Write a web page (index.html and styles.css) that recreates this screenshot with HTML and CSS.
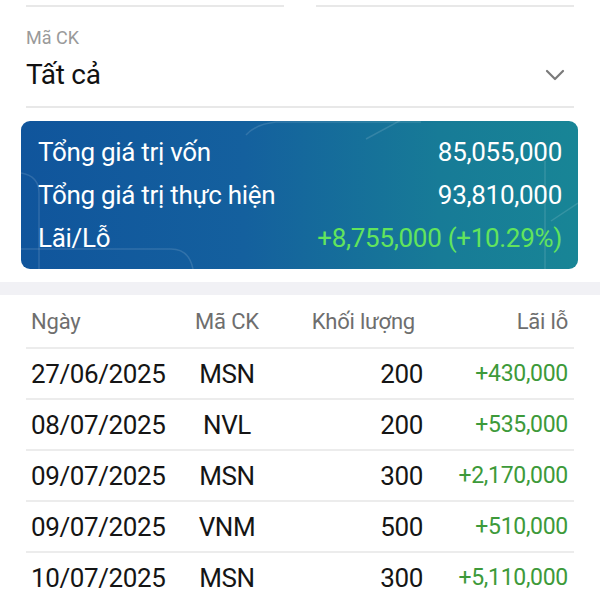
FILE: index.html
```html
<!DOCTYPE html>
<html lang="vi">
<head>
<meta charset="utf-8">
<title>Lãi lỗ</title>
<link rel="stylesheet" href="styles.css">
</head>
<body>
<div class="top-lines">
  <div class="top-line"></div>
  <div class="top-line"></div>
</div>

<div class="field">
  <div class="field-label">Mã CK</div>
  <div class="field-value">
    <span>Tất cả</span>
    <svg class="chevron" width="20" height="12" viewBox="0 0 20 12"><path d="M2 2 L10 10 L18 2" fill="none" stroke="#7a7a7a" stroke-width="2.2" stroke-linecap="round" stroke-linejoin="round"/></svg>
  </div>
</div>

<div class="card">
  <svg class="card-deco" width="557" height="148" viewBox="0 0 557 148" preserveAspectRatio="none">
    <g fill="none" stroke="#ffffff" stroke-opacity="0.13" stroke-width="1.5">
      <path d="M225 14 Q235 3 255 1 L400 1"/>
      <path d="M345 18 L382 -2"/>
      <path d="M524 40 L524 148"/>
      <path d="M530 100 L557 82"/>
      <path d="M18 150 L18 72 Q18 55 0 52"/>
      <path d="M0 128 L150 128 Q168 128 172 148"/>
    </g>
  </svg>
  <div class="card-row"><span>Tổng giá trị vốn</span><span>85,055,000</span></div>
  <div class="card-row"><span>Tổng giá trị thực hiện</span><span>93,810,000</span></div>
  <div class="card-row"><span>Lãi/Lỗ</span><span class="up-bright">+8,755,000 (+10.29%)</span></div>
</div>

<div class="band"></div>

<div class="table">
  <div class="thead">
    <span class="c-date">Ngày</span>
    <span class="c-code">Mã CK</span>
    <span class="c-vol h-vol">Khối lượng</span>
    <span class="c-pl">Lãi lỗ</span>
  </div>
  <div class="trow">
    <span class="c-date">27/06/2025</span><span class="c-code">MSN</span><span class="c-vol">200</span><span class="c-pl up">+430,000</span>
  </div>
  <div class="trow">
    <span class="c-date">08/07/2025</span><span class="c-code">NVL</span><span class="c-vol">200</span><span class="c-pl up">+535,000</span>
  </div>
  <div class="trow">
    <span class="c-date">09/07/2025</span><span class="c-code">MSN</span><span class="c-vol">300</span><span class="c-pl up">+2,170,000</span>
  </div>
  <div class="trow">
    <span class="c-date">09/07/2025</span><span class="c-code">VNM</span><span class="c-vol">500</span><span class="c-pl up">+510,000</span>
  </div>
  <div class="trow">
    <span class="c-date">10/07/2025</span><span class="c-code">MSN</span><span class="c-vol">300</span><span class="c-pl up">+5,110,000</span>
  </div>
</div>
</body>
</html>
```
FILE: styles.css
```css
* { box-sizing: border-box; }
html, body {
  margin: 0;
  padding: 0;
  background: #ffffff;
  font-family: Roboto, "Noto Sans", "Liberation Sans", sans-serif;
  color: #1a1a1a;
  overflow: hidden;
}
.top-lines {
  display: flex;
  gap: 32px;
  padding: 0 26px;
  height: 7px;
}
.top-line {
  flex: 1;
  border-bottom: 2px solid #e8e8e8;
}
.field {
  padding: 0 26px;
}
.field-label {
  margin-top: 20px;
  font-size: 18px;
  line-height: 22px;
  color: #9a9a9a;
}
.field-value {
  display: flex;
  align-items: center;
  justify-content: space-between;
  height: 59px;
  padding-bottom: 10px;
  padding-top: 4px;
  font-size: 28px;
  letter-spacing: -0.3px;
  color: #111;
  border-bottom: 2px solid #e8e8e8;
}
.chevron {
  margin-right: 9px;
}
.card {
  position: relative;
  overflow: hidden;
  margin: 13px 22px 0 21px;
  height: 148px;
  padding: 9px 16px 10px 17px;
  border-radius: 9px;
  background: linear-gradient(90deg, #10559c 0%, #14609e 40%, #177b97 75%, #188596 100%);
  color: #ffffff;
}
.card-deco {
  position: absolute;
  left: 0;
  top: 0;
}
.card-row {
  position: relative;
  display: flex;
  justify-content: space-between;
  align-items: center;
  height: 43px;
  font-size: 26px;
  letter-spacing: -0.3px;
}
.up-bright { color: #62e45c; }
.band {
  margin-top: 13px;
  height: 13px;
  background: #f1f1f5;
}
.table {
  padding: 0 26px;
}
.thead, .trow {
  display: grid;
  grid-template-columns: 154px 94px 149px 145px;
  align-items: center;
  padding-right: 6px;
}
.thead {
  height: 52px;
  font-size: 22px;
  letter-spacing: -0.2px;
  color: #6e6e6e;
}
.trow {
  height: 51px;
  border-top: 2px solid #ececec;
  font-size: 26px;
  letter-spacing: -0.4px;
  color: #151515;
}
.c-date { padding-left: 5px; white-space: nowrap; }
.c-code { text-align: center; }
.c-vol { text-align: right; }
.h-vol { padding-right: 8px; }
.c-pl { text-align: right; white-space: nowrap; }
.trow .c-pl { font-size: 23px; letter-spacing: -0.3px; }
.up { color: #3d9a3a; }
```
